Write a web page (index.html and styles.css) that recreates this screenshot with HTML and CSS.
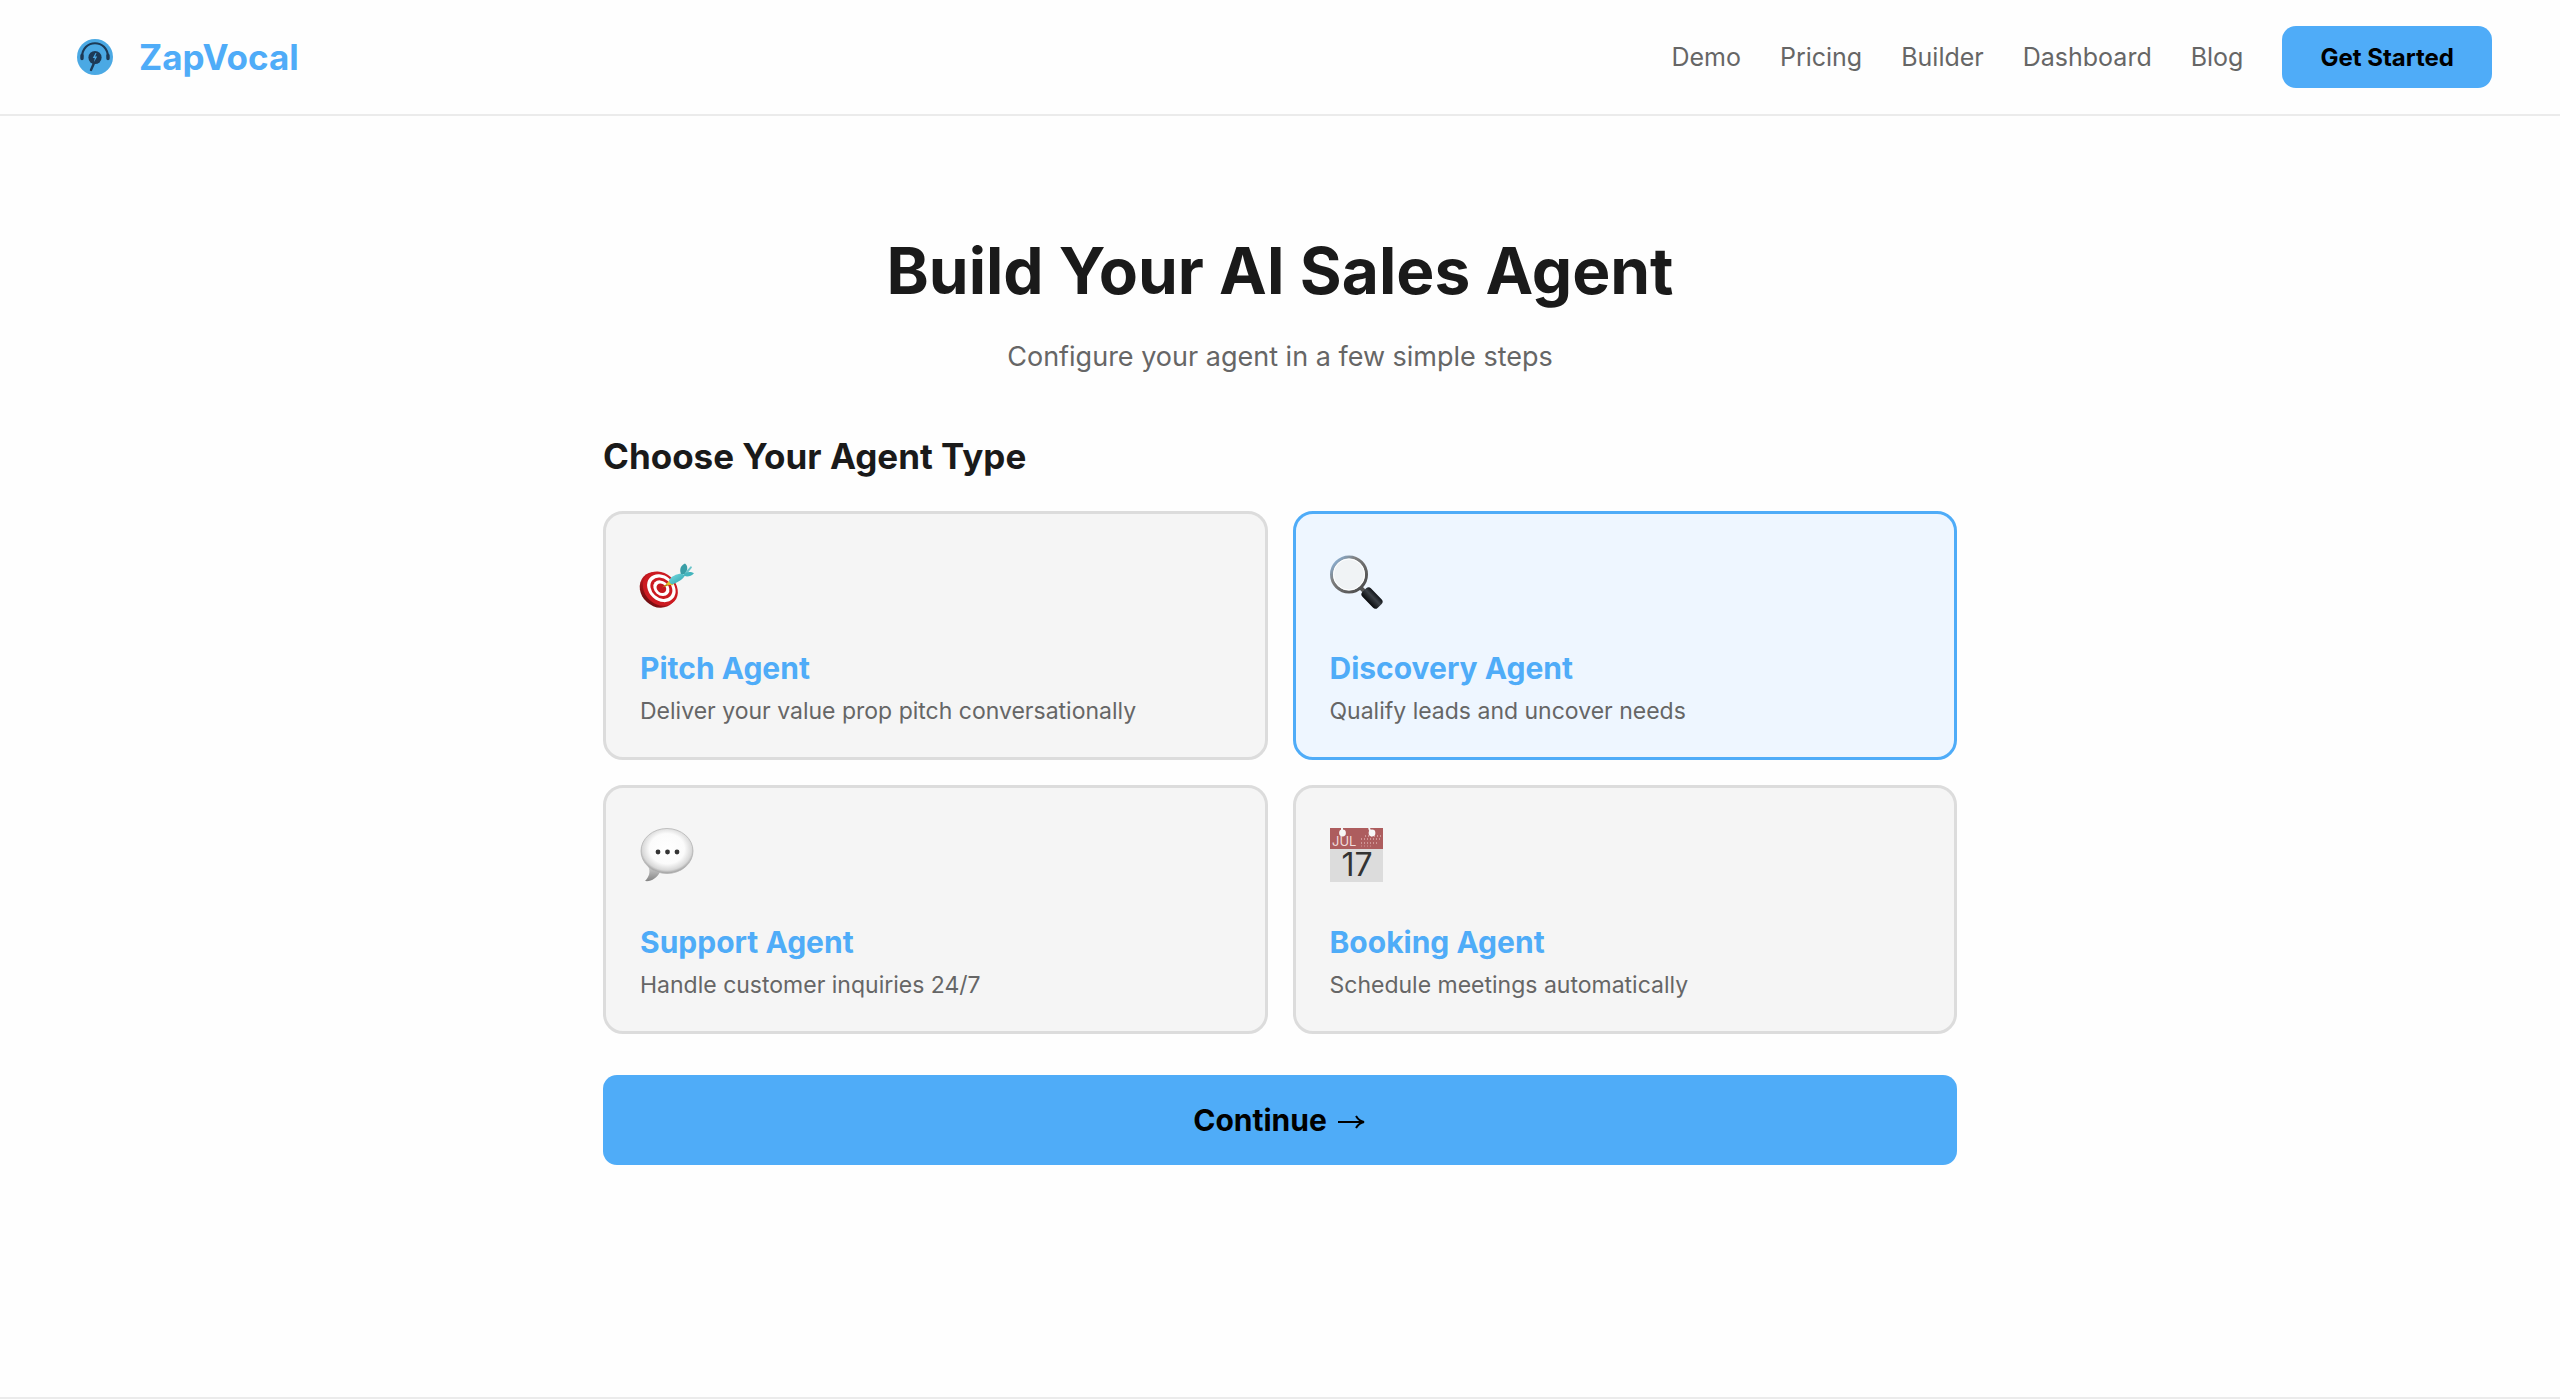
FILE: index.html
```html
<!DOCTYPE html>
<html lang="en">
<head>
<meta charset="utf-8">
<meta name="viewport" content="width=device-width, initial-scale=1">
<title>ZapVocal – Agent Builder</title>
<link rel="stylesheet" href="styles.css">
</head>
<body>
<header class="site-header">
  <a class="brand" href="#">
    <svg class="brand-mark" viewBox="0 0 54 54" aria-hidden="true">
      <circle cx="27" cy="27" r="18" fill="#4ba9e4"/>
      <path d="M14 27.500C14 8.500 40 8.500 40 27.500" fill="none" stroke="#1d3a56" stroke-width="2.200"/>
      <path d="M14 25.500v3M40 25.500v3" stroke="#1d3a56" stroke-width="3.400" stroke-linecap="round"/>
      <circle cx="27" cy="27.500" r="6.600" fill="#1d3a56"/>
      <path d="M26.500 32L23 40" stroke="#1d3a56" stroke-width="2.400" stroke-linecap="round"/>
      <path d="M27.500 23L24.800 28h2L26 32l3.200-5.400h-2.100L28.500 23z" fill="#4ba9e4"/>
    </svg>
    <span>ZapVocal</span>
  </a>
  <nav class="site-nav">
    <a href="#">Demo</a>
    <a href="#">Pricing</a>
    <a href="#">Builder</a>
    <a href="#">Dashboard</a>
    <a href="#">Blog</a>
    <button class="cta" type="button">Get Started</button>
  </nav>
</header>

<main class="builder">
  <h1>Build Your AI Sales Agent</h1>
  <p class="lead">Configure your agent in a few simple steps</p>
  <h2>Choose Your Agent Type</h2>
  <div class="agents">
    <button class="agent" type="button" aria-pressed="false">
      <svg class="agent-icon" viewBox="0 0 54 54" aria-hidden="true">
        <defs>
          <linearGradient id="rim" x1="0" y1="0" x2="0" y2="1"><stop offset="0" stop-color="#cf1b22"/><stop offset=".6" stop-color="#b5151b"/><stop offset="1" stop-color="#6e0d10"/></linearGradient>
          <linearGradient id="dart" x1="0" y1="0" x2="1" y2="1"><stop offset="0" stop-color="#7de0e6"/><stop offset="1" stop-color="#269ea8"/></linearGradient>
        </defs>
        <g transform="rotate(42 20 35)">
          <ellipse cx="19" cy="37" rx="19.500" ry="16.500" fill="url(#rim)"/>
          <ellipse cx="20" cy="34.500" rx="19" ry="15.500" fill="#cc1a21"/>
          <ellipse cx="20.500" cy="33.500" rx="15.500" ry="12.500" fill="#fff"/>
          <ellipse cx="20.500" cy="33.500" rx="12" ry="9.600" fill="#cc1a21"/>
          <ellipse cx="20.500" cy="33.500" rx="8.800" ry="7" fill="#fff"/>
          <ellipse cx="20.500" cy="33.500" rx="5.300" ry="4.300" fill="#c4181f"/>
        </g>
        <g transform="translate(0 8) scale(1 .8)">
          <path d="M22 32l7-7 2 3z" fill="#b88a12"/>
          <path d="M26 28l4-6 4 4-1 3z" fill="#e6c326"/>
          <path d="M29 23C31 18 36 15 42 14L45 17C42 23 37 26 32 28Q29 26 29 23z" fill="url(#dart)"/>
          <path d="M41 15C39 9 41 4 45 2C48 5 48 10 45 15z" fill="#399ea6"/>
          <path d="M44 16C46 11 49 8 51 5L52 7L48 13z" fill="#6bc5cb"/>
          <path d="M43 17C46 11 51 12 54 14C51 18 47 19 43 17z" fill="#43b5bd"/>
        </g>
      </svg>
      <span class="agent-name">Pitch Agent</span>
      <span class="agent-text">Deliver your value prop pitch conversationally</span>
    </button>
    <button class="agent selected" type="button" aria-pressed="true">
      <svg class="agent-icon" viewBox="0 0 54 54" aria-hidden="true">
        <defs>
          <linearGradient id="ring" x1="0" y1="0" x2="1" y2="1"><stop offset="0" stop-color="#8fc0f0"/><stop offset=".35" stop-color="#808080"/><stop offset="1" stop-color="#444"/></linearGradient>
          <linearGradient id="grip" x1="0" y1="0" x2="0" y2="1"><stop offset="0" stop-color="#111418"/><stop offset=".4" stop-color="#3c4147"/><stop offset="1" stop-color="#07090b"/></linearGradient>
        </defs>
        <path d="M30 33l5 5" stroke="#555" stroke-width="4"/>
        <rect x="-11" y="-6" width="22" height="12" rx="3.500" transform="translate(42 44) rotate(46)" fill="url(#grip)"/>
        <circle cx="19" cy="20.500" r="17.500" fill="#edf1f3" stroke="url(#ring)" stroke-width="3"/>
        <circle cx="19" cy="20.500" r="15.500" fill="#f0f3f5" stroke="#fff" stroke-width="1"/>
      </svg>
      <span class="agent-name">Discovery Agent</span>
      <span class="agent-text">Qualify leads and uncover needs</span>
    </button>
    <button class="agent" type="button" aria-pressed="false">
      <svg class="agent-icon" viewBox="0 0 54 54" aria-hidden="true">
        <defs>
          <radialGradient id="bubble" cx=".5" cy=".45" r=".56"><stop offset="0" stop-color="#fff"/><stop offset=".6" stop-color="#fbfbfb"/><stop offset=".85" stop-color="#d8d8d8"/><stop offset="1" stop-color="#8f8f8f"/></radialGradient>
          <linearGradient id="tail" x1="0" y1="0" x2="0" y2="1"><stop offset="0" stop-color="#d0d0d0"/><stop offset="1" stop-color="#858585"/></linearGradient>
        </defs>
        <path d="M8 38C11 44 9 49 5 53C11 54 17 50 20 44z" fill="url(#tail)"/>
        <ellipse cx="27" cy="23" rx="26" ry="22.500" fill="url(#bubble)" stroke="#b4b4b4" stroke-width=".8"/>
        <g fill="#343434"><circle cx="18" cy="24" r="2.400"/><circle cx="27.500" cy="24" r="2.400"/><circle cx="37" cy="24" r="2.400"/></g>
      </svg>
      <span class="agent-name">Support Agent</span>
      <span class="agent-text">Handle customer inquiries 24/7</span>
    </button>
    <button class="agent" type="button" aria-pressed="false">
      <svg class="agent-icon" viewBox="0 0 54 54" aria-hidden="true">
        <path d="M0 0h53v54H0z" fill="#dcdcdc"/>
        <path d="M0 0h53v21H0z" fill="#ad5d5e"/>
        <path d="M31 11h21M31 15h18M35 8h17" stroke="#cf9797" stroke-width="2" stroke-dasharray="1 2"/>
        <path d="M31 18h12" stroke="#cf9797" stroke-width="1" stroke-dasharray="1 2"/>
        <path d="M12 0v5M39 0l2 5" stroke="#f5f5f5" stroke-width="2"/>
        <circle cx="12.500" cy="5" r="3.400" fill="#f7f7f7"/><circle cx="42" cy="5" r="3.400" fill="#f7f7f7"/>
        <text class="cal-month" x="2" y="18">JUL</text>
        <text class="cal-day" x="27" y="48">17</text>
      </svg>
      <span class="agent-name">Booking Agent</span>
      <span class="agent-text">Schedule meetings automatically</span>
    </button>
  </div>
  <button class="continue" type="button">Continue
    <svg class="arrow" viewBox="0 0 30 20" aria-hidden="true"><path d="M1 12h26M19 6q3 5 8 6q-5 1-8 6" fill="none" stroke="#000" stroke-width="2"/></svg>
  </button>
</main>
<footer class="site-footer"></footer>
</body>
</html>
```
FILE: styles.css
```css
* { box-sizing: border-box; }

body {
  margin: 0;
  background: #fefefe;
  color: #1a1a1a;
  font-family: Inter, "Liberation Sans", sans-serif;
  font-size: 25px;
}

a { color: inherit; text-decoration: none; }

button { font-family: inherit; cursor: pointer; }

.site-header {
  display: flex;
  align-items: center;
  justify-content: space-between;
  padding: 26px 68px;
  border-bottom: 2px solid #ebebeb;
}

.brand {
  display: flex;
  align-items: center;
  gap: 17px;
  color: #4facf8;
  font-size: 35px;
  font-weight: 700;
}

.brand-mark { width: 54px; height: 54px; }

.site-nav {
  display: flex;
  align-items: center;
  gap: 39px;
  color: #666;
}

.cta {
  height: 62px;
  padding: 0 38px;
  border: 0;
  border-radius: 14px;
  background: #4facf8;
  color: #000;
  font-size: 24px;
  font-weight: 700;
}

.builder {
  max-width: 1354px;
  margin: 0 auto;
  padding: 115px 0 232px;
}

h1 {
  margin: 0;
  font-size: 64px;
  line-height: 80px;
  font-weight: 700;
  text-align: center;
}

.lead {
  margin: 26px 0 0;
  color: #666;
  font-size: 27px;
  line-height: 40px;
  text-align: center;
}

h2 {
  margin: 57px 0 33px;
  font-size: 35px;
  line-height: 44px;
  font-weight: 700;
}

.agents {
  display: grid;
  grid-template-columns: 1fr 1fr;
  gap: 25px;
}

.agent {
  display: flex;
  flex-direction: column;
  align-items: flex-start;
  padding: 40px 34px 28px;
  border: 3px solid #dcdcdc;
  border-radius: 20px;
  background: #f5f5f5;
  text-align: left;
}

.agent.selected {
  border-color: #4facf8;
  background: #eef6ff;
}

.agent-icon {
  width: 54px;
  height: 54px;
  margin-bottom: 36px;
  overflow: visible;
}

.cal-month { fill: #f0dcdc; font-size: 13px; }

.cal-day {
  fill: #333;
  font-size: 32px;
  text-anchor: middle;
}

.agent-name {
  margin-bottom: 1px;
  color: #4facf8;
  font-size: 30px;
  line-height: 48px;
  font-weight: 700;
}

.agent-text {
  color: #666;
  font-size: 23px;
  line-height: 36px;
}

.continue {
  display: flex;
  align-items: center;
  justify-content: center;
  gap: 10px;
  width: 100%;
  height: 90px;
  margin-top: 41px;
  border: 0;
  border-radius: 14px;
  background: #4facf8;
  color: #000;
  font-size: 30px;
  font-weight: 700;
}

.arrow { width: 30px; height: 20px; }

.site-footer { border-top: 2px solid #ebebeb; }
```
